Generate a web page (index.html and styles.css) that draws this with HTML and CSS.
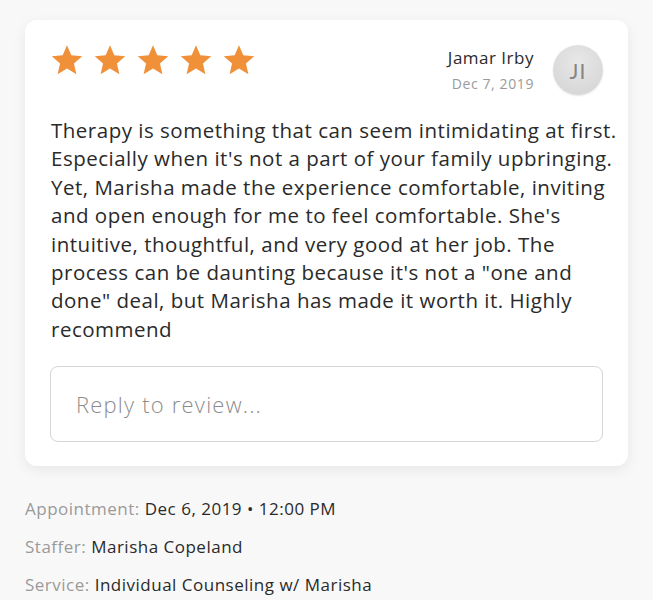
FILE: index.html
```html
<!DOCTYPE html>
<html>
<head>
<meta charset="utf-8">
<link rel="stylesheet" href="styles.css">
</head>
<body>
<div class="page">
  <div class="card">
    <div class="head">
      <div class="stars">
        <svg class="star" viewBox="0 0 24 24"><path d="M12 1.6l3.05 7.1 7.7.7-5.85 5.07 1.75 7.53L12 18.02 5.35 22l1.75-7.53L1.25 9.4l7.7-.7z"/></svg>
        <svg class="star" viewBox="0 0 24 24"><path d="M12 1.6l3.05 7.1 7.7.7-5.85 5.07 1.75 7.53L12 18.02 5.35 22l1.75-7.53L1.25 9.4l7.7-.7z"/></svg>
        <svg class="star" viewBox="0 0 24 24"><path d="M12 1.6l3.05 7.1 7.7.7-5.85 5.07 1.75 7.53L12 18.02 5.35 22l1.75-7.53L1.25 9.4l7.7-.7z"/></svg>
        <svg class="star" viewBox="0 0 24 24"><path d="M12 1.6l3.05 7.1 7.7.7-5.85 5.07 1.75 7.53L12 18.02 5.35 22l1.75-7.53L1.25 9.4l7.7-.7z"/></svg>
        <svg class="star" viewBox="0 0 24 24"><path d="M12 1.6l3.05 7.1 7.7.7-5.85 5.07 1.75 7.53L12 18.02 5.35 22l1.75-7.53L1.25 9.4l7.7-.7z"/></svg>
      </div>
      <div class="author">
        <div class="who">
          <div class="name">Jamar Irby</div>
          <div class="date">Dec 7, 2019</div>
        </div>
        <div class="avatar">JI</div>
      </div>
    </div>
    <p class="review">Therapy is something that can seem intimidating at first.<br>Especially when it's not a part of your family upbringing.<br>Yet, Marisha made the experience comfortable, inviting<br>and open enough for me to feel comfortable. She's<br>intuitive, thoughtful, and very good at her job. The<br>process can be daunting because it's not a "one and<br>done" deal, but Marisha has made it worth it. Highly<br>recommend</p>
    <div class="reply">Reply to review...</div>
  </div>
  <div class="meta">
    <div class="row"><span class="label">Appointment:</span> <span class="value">Dec 6, 2019 • 12:00 PM</span></div>
    <div class="row"><span class="label">Staffer:</span> <span class="value">Marisha Copeland</span></div>
    <div class="row"><span class="label">Service:</span> <span class="value">Individual Counseling w/ Marisha</span></div>
  </div>
</div>
</body>
</html>
```

FILE: styles.css
```css
html, body {
  margin: 0;
  padding: 0;
  background: #f8f8f8;
  font-family: "Open Sans", Lato, sans-serif;
  color: #2a2a2a;
}
.page {
  padding: 20px 25px 0 25px;
}
.card {
  background: #fff;
  border-radius: 12px;
  box-shadow: 0 4px 14px rgba(0, 0, 0, 0.07);
  padding: 25px 25px 24px 25px;
}
.head {
  display: flex;
  justify-content: space-between;
  align-items: flex-start;
}
.stars {
  display: flex;
  gap: 9px;
  margin-top: -2px;
}
.star {
  width: 34px;
  height: 34px;
  fill: #f0913a;
}
.author {
  display: flex;
  align-items: center;
  gap: 19px;
}
.who {
  text-align: right;
}
.name {
  font-size: 17px;
  letter-spacing: 0.5px;
  color: #2a2a2a;
  line-height: 24px;
}
.date {
  font-size: 14px;
  letter-spacing: 0.6px;
  color: #9a9a9a;
  margin-top: 4px;
  line-height: 20px;
}
.avatar {
  width: 50px;
  height: 50px;
  border-radius: 50%;
  background: radial-gradient(circle at 50% 35%, #e8e8e8, #d2d2d2);
  box-shadow: 0 1px 2px rgba(0, 0, 0, 0.1);
  color: #858585;
  font-family: Lato, "Open Sans", sans-serif;
  font-size: 21px;
  font-weight: 400;
  letter-spacing: 1px;
  display: flex;
  align-items: center;
  justify-content: center;
}
.review {
  margin: 21px -20px 0 1px;
  font-size: 20.5px;
  letter-spacing: 0.5px;
  line-height: 28.4px;
  color: #2a2a2a;
}
.reply {
  margin-top: 23px;
  height: 74px;
  border: 1px solid #d6d6d6;
  border-radius: 8px;
  display: flex;
  align-items: center;
  padding-left: 25px;
  font-size: 22px;
  letter-spacing: 1.2px;
  color: #8c8c8c;
  font-weight: 300;
}
.meta {
  padding-top: 24px;
}
.row {
  font-size: 17px;
  letter-spacing: 0.5px;
  line-height: 38px;
}
.label {
  color: #9a9a9a;
}
.value {
  color: #2a2a2a;
}
```
